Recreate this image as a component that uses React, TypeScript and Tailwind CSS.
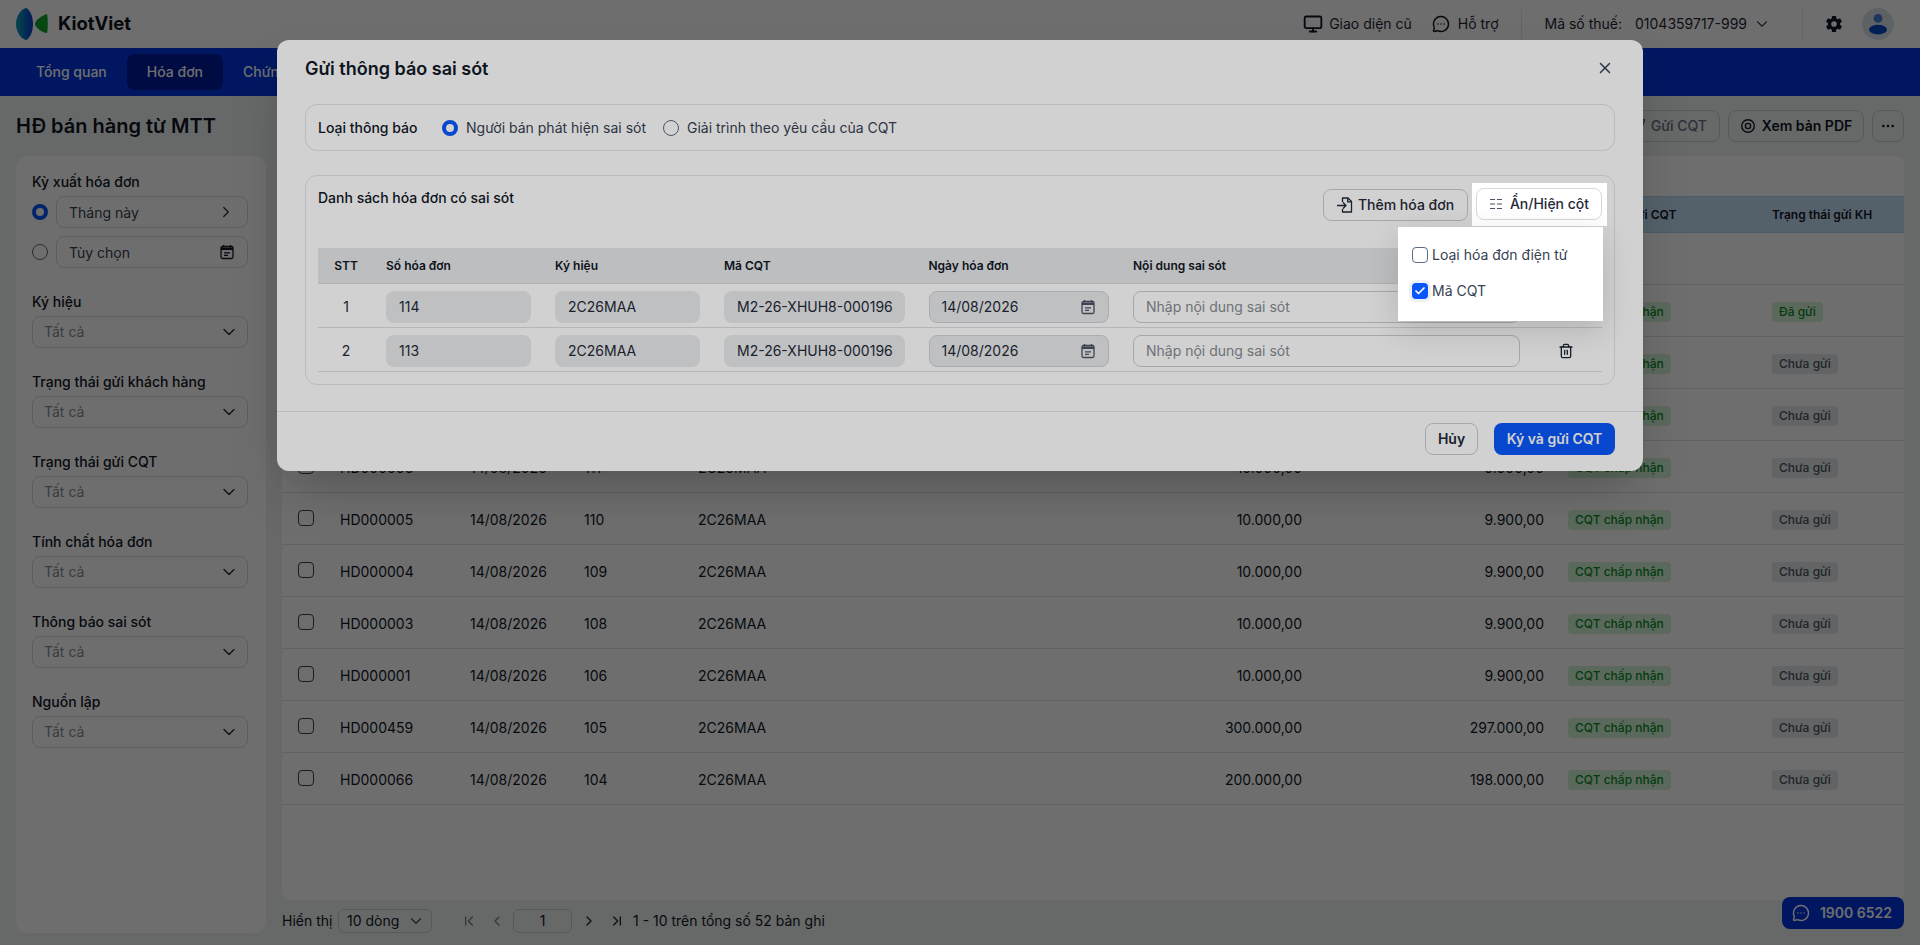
import {
  Check,
  ChevronDown,
  ChevronFirst,
  ChevronLast,
  ChevronLeft,
  ChevronRight,
  MessageCircleMore,
  Monitor,
  MoreHorizontal,
  Send,
  Trash2,
  X,
} from 'lucide-react';
import { IoSettingsSharp } from 'react-icons/io5';

const navItems = ['Tổng quan', 'Hóa đơn', 'Chứng từ', 'Báo cáo'];

const filters = ['Ký hiệu', 'Trạng thái gửi khách hàng', 'Trạng thái gửi CQT', 'Tính chất hóa đơn', 'Thông báo sai sót', 'Nguồn lập'];

const rows = [
  { code: 'HD000009', no: '114', total: '10.000,00', pay: '9.900,00', sent: true },
  { code: 'HD000008', no: '113', total: '10.000,00', pay: '9.900,00', sent: false },
  { code: 'HD000007', no: '112', total: '10.000,00', pay: '9.900,00', sent: false },
  { code: 'HD000006', no: '111', total: '10.000,00', pay: '9.900,00', sent: false },
  { code: 'HD000005', no: '110', total: '10.000,00', pay: '9.900,00', sent: false },
  { code: 'HD000004', no: '109', total: '10.000,00', pay: '9.900,00', sent: false },
  { code: 'HD000003', no: '108', total: '10.000,00', pay: '9.900,00', sent: false },
  { code: 'HD000001', no: '106', total: '10.000,00', pay: '9.900,00', sent: false },
  { code: 'HD000459', no: '105', total: '300.000,00', pay: '297.000,00', sent: false },
  { code: 'HD000066', no: '104', total: '200.000,00', pay: '198.000,00', sent: false },
];

const errorRows = [
  { stt: 1, no: '114' },
  { stt: 2, no: '113' },
];

function Logo() {
  return (
    <svg width="34" height="32" viewBox="0 0 34 32" fill="none">
      <defs>
        <linearGradient id="kv-blue" x1="0" y1="0" x2="1" y2="0">
          <stop offset="0" stopColor="#0f9fb0" />
          <stop offset="1" stopColor="#0a3fd0" />
        </linearGradient>
      </defs>
      <path d="M10 0C5 1 0 8 0 16c0 8 5 15 10 16 3-1 7-7 7-16S13 1 10 0Z" fill="url(#kv-blue)" />
      <path d="M31 6c-4 1-12 6-12 10 0 4 8 9 12 9 1-2 1-16 0-19Z" fill="#12a52a" />
    </svg>
  );
}

function CalendarIcon({ className }: { className?: string }) {
  return (
    <svg className={className} viewBox="0 0 16 16" fill="none">
      <path d="M4.5 1v2.5M11.5 1v2.5" stroke="currentColor" strokeWidth="1.4" />
      <rect x="2" y="2.5" width="12" height="12" rx="1.5" stroke="currentColor" strokeWidth="1.3" />
      <path d="M2 3.5h12v2.5H2z" fill="currentColor" />
      <path d="M5 8.8h6M5 11.4h4" stroke="currentColor" strokeWidth="1.2" />
    </svg>
  );
}

function ColumnsIcon() {
  return (
    <svg width="14" height="14" viewBox="0 0 14 14" fill="none" stroke="#4b5563" strokeWidth="1">
      <path d="M1 2.5h5M8 2.5h5M1 7h5M8 7h5M1 11.5h5M8 11.5h5" />
    </svg>
  );
}

function AddFileIcon() {
  return (
    <svg width="16" height="16" viewBox="0 0 16 16" fill="none" stroke="currentColor" strokeWidth="1.3">
      <path d="M5.5 5V1h5.5l3.5 3.5V15H5.5v-3" strokeLinejoin="round" />
      <path d="M10.7 1v3.8h3.8" />
      <path d="M0.5 8.5h8.5M6.3 5.8 9 8.5l-2.7 2.7" strokeLinecap="round" strokeLinejoin="round" />
    </svg>
  );
}

function EyeRing() {
  return (
    <svg width="16" height="16" viewBox="0 0 16 16" fill="none" stroke="currentColor" strokeWidth="1.4">
      <circle cx="8" cy="8" r="6.3" />
      <circle cx="8" cy="8" r="2.6" />
    </svg>
  );
}

function Avatar() {
  return (
    <div className="flex h-8 w-8 items-center justify-center rounded-full bg-[#dbe3ea]">
      <svg width="18" height="22" viewBox="0 0 18 22">
        <circle cx="9" cy="5.4" r="4.4" fill="#4a7bd0" />
        <ellipse cx="9" cy="16.6" rx="9" ry="4.9" fill="#0048c8" />
      </svg>
    </div>
  );
}

function Radio({ on }: { on?: boolean }) {
  return on ? (
    <span className="h-4 w-4 shrink-0 rounded-full border-[4px] border-[#0957fa] bg-white" />
  ) : (
    <span className="h-4 w-4 shrink-0 rounded-full border border-[#5d6b7e] bg-white" />
  );
}

function Box({ on }: { on?: boolean }) {
  return on ? (
    <span className="flex h-4 w-4 shrink-0 items-center justify-center rounded-[4px] bg-[#0957fa] ring-[3px] ring-[#eceff3]">
      <Check className="h-3 w-3 text-white" strokeWidth={3.5} />
    </span>
  ) : (
    <span className="h-4 w-4 shrink-0 rounded-[4px] border border-[#5d6b7e] bg-white" />
  );
}

function Sidebar() {
  return (
    <aside className="flex w-[250px] shrink-0 flex-col rounded-xl bg-white pl-4 pr-[18px] pt-4">
      <div className="mb-[4px] flex h-[20px] items-center text-sm font-medium text-[#111827]">Kỳ xuất hóa đơn</div>
      <div className="flex flex-col gap-2">
        <div className="flex items-center gap-2">
          <Radio on />
          <div className="flex h-8 flex-1 items-center justify-between rounded-lg border border-[#d3d8de] pl-3 pr-[12px] pt-px text-sm text-[#374151]">
            Tháng này
            <ChevronRight className="-mt-px h-[18px] w-[18px] text-[#1f2937]" strokeWidth={1.6} />
          </div>
        </div>
        <div className="flex items-center gap-2">
          <Radio />
          <div className="flex h-8 flex-1 items-center justify-between rounded-lg border border-[#d3d8de] pl-3 pr-[12px] pt-px text-sm text-[#374151]">
            Tùy chọn
            <CalendarIcon className="-mt-px h-4 w-4 text-[#111827]" />
          </div>
        </div>
      </div>
      <div className="mt-[24px] flex flex-col gap-[24px]">
        {filters.map((f) => (
          <div key={f} className="flex flex-col gap-[4px]">
            <div className="flex h-[20px] items-center text-sm font-medium text-[#111827]">{f}</div>
            <div className="flex h-8 items-center justify-between rounded-lg border border-[#d3d8de] pl-[11px] pr-[8px] text-sm text-[#868c93]">
              Tất cả
              <ChevronDown className="h-5 w-5 text-[#1f2937]" strokeWidth={1.5} />
            </div>
          </div>
        ))}
      </div>
    </aside>
  );
}

const tableCols = 'grid grid-cols-[58px_130px_114px_114px_302px_302px_242px_24px_204px_132px] items-center';

function InvoiceTable() {
  return (
    <div className="flex-1 overflow-hidden rounded-lg bg-white pt-[40px]">
      <div className={`${tableCols} h-[37px] border-y border-[#b4d4ee] bg-[#c4e0f6] text-xs font-semibold text-[#111827]`}>
        <span />
        <span>Số hóa đơn</span>
        <span>Ngày hóa đơn</span>
        <span>Số HĐ</span>
        <span>Ký hiệu</span>
        <span className="text-right">Tổng tiền</span>
        <span className="text-right">Thanh toán</span>
        <span />
        <span>Trạng thái gửi CQT</span>
        <span>Trạng thái gửi KH</span>
      </div>
      <div className="h-[52px] border-b border-[#dde1e5]" />
      {rows.map((r) => (
        <div key={r.code} className={`${tableCols} h-[52px] border-b border-[#dde1e5] pt-[2px] text-sm text-[#111827]`}>
          <span className="-mt-[4px] pl-4">
            <span className="block h-4 w-4 rounded-[4px] border border-[#374151]" />
          </span>
          <span>{r.code}</span>
          <span>14/08/2026</span>
          <span>{r.no}</span>
          <span>2C26MAA</span>
          <span className="text-right">{r.total}</span>
          <span className="text-right">{r.pay}</span>
          <span />
          <span>
            <span className="inline-flex h-5 items-center rounded bg-[#d3f3d8] px-[7px] text-xs font-medium text-[#0a8a1f]">
              CQT chấp nhận
            </span>
          </span>
          <span>
            {r.sent ? (
              <span className="inline-flex h-5 items-center rounded bg-[#d3f3d8] px-[7px] text-xs font-medium text-[#0a8a1f]">
                Đã gửi
              </span>
            ) : (
              <span className="inline-flex h-5 items-center rounded bg-[#e3e6ea] px-[7px] text-xs font-medium text-[#4b5563]">
                Chưa gửi
              </span>
            )}
          </span>
        </div>
      ))}
    </div>
  );
}

function Pager() {
  return (
    <div className="flex h-[24px] items-center text-sm text-[#111827]">
      <span className="w-[56px]">Hiển thị</span>
      <div className="flex h-6 w-[94px] items-center justify-between rounded-md border border-[#c9ced4] pl-2 pr-[6px]">
        10 dòng
        <ChevronDown className="h-[18px] w-[18px] text-[#374151]" strokeWidth={1.5} />
      </div>
      <ChevronFirst className="ml-[29px] h-4 w-4 text-[#7b8087]" />
      <ChevronLeft className="ml-3 h-4 w-4 text-[#7b8087]" />
      <div className="ml-2 flex h-6 w-[59px] items-center justify-center rounded-md border border-[#c9ced4]">1</div>
      <ChevronRight className="ml-[9px] h-4 w-4 text-[#1f2937]" />
      <ChevronLast className="ml-3 h-4 w-4 text-[#1f2937]" />
      <span className="ml-2">1 - 10 trên tổng số 52 bản ghi</span>
    </div>
  );
}

function NoticeModal() {
  return (
    <div className="absolute left-[277px] top-[40px] flex h-[431px] w-[1366px] flex-col rounded-xl bg-white shadow-2xl">
      <div className="flex h-[64px] items-start justify-between px-7 pt-[15px]">
        <h2 className="text-lg font-semibold text-[#111827]">Gửi thông báo sai sót</h2>
        <X className="mr-px mt-1 h-[18px] w-[18px] text-[#374151]" />
      </div>
      <div className="flex flex-1 flex-col gap-6 px-7">
        <div className="flex h-[47px] items-center rounded-xl border border-[#e0e4ea] px-3 text-sm">
          <span className="w-[124px] font-medium text-[#111827]">Loại thông báo</span>
          <div className="flex items-center gap-2 text-[#374151]">
            <Radio on />
            Người bán phát hiện sai sót
          </div>
          <div className="ml-[17px] flex items-center gap-2 text-[#374151]">
            <Radio />
            Giải trình theo yêu cầu của CQT
          </div>
        </div>
        <div className="flex h-[210px] flex-col rounded-xl border border-[#e0e4ea] px-3 pt-3">
          <div className="flex h-8 items-start justify-between">
            <span className="flex h-5 items-center text-sm font-medium text-[#111827]">Danh sách hóa đơn có sai sót</span>
            <div className="flex items-center gap-1">
              <button className="flex h-8 w-[145px] items-center justify-center gap-[5px] rounded-lg border border-[#c9ced4] text-sm font-medium text-[#1f2937]">
                <AddFileIcon />
                Thêm hóa đơn
              </button>
              {/* highlighted by the tour, sits above the tour mask */}
              <div className="relative z-30 -my-[5px] -mr-[5px] bg-white pb-[6px] pl-1 pr-[5px] pt-[5px]">
                <button className="flex h-8 w-[126px] items-center justify-center gap-[7px] rounded-lg border border-[#d3d8de] bg-white text-sm font-medium text-[#1f2937]">
                  <ColumnsIcon />
                  Ẩn/Hiện cột
                </button>
                <div className="absolute right-[4px] top-[44px] h-[94px] w-[205px] bg-white pl-[14px] pt-[20px] shadow-[0_10px_30px_rgba(0,0,0,0.14)]">
                  <label className="flex h-4 items-center gap-1 text-sm text-[#374151]">
                    <Box />
                    Loại hóa đơn điện tử
                  </label>
                  <label className="mt-5 flex h-4 items-center gap-1 text-sm text-[#374151]">
                    <Box on />
                    Mã CQT
                  </label>
                </div>
              </div>
            </div>
          </div>
          <div className="mt-[28px] grid h-9 grid-cols-[56px_169px_169px_204.5px_204.5px_411px_70px] items-center border-b border-[#d8dadd] bg-[#e7e8ea] text-xs font-semibold text-[#111827]">
            <span className="text-center">STT</span>
            <span className="pl-3">Số hóa đơn</span>
            <span className="pl-3">Ký hiệu</span>
            <span className="pl-3">Mã CQT</span>
            <span className="pl-3">Ngày hóa đơn</span>
            <span className="pl-3">Nội dung sai sót</span>
            <span />
          </div>
          {errorRows.map((r) => (
            <div
              key={r.stt}
              className="grid h-11 grid-cols-[56px_169px_169px_204.5px_204.5px_411px_70px] items-start border-b border-[#dcdee1] pt-[7px] text-sm text-[#1f2937]"
            >
              <span className="flex h-8 items-center justify-center">{r.stt}</span>
              <div className="px-3">
                <div className="flex h-8 items-center rounded-lg bg-[#eaebed] px-[13px]">{r.no}</div>
              </div>
              <div className="px-3">
                <div className="flex h-8 items-center rounded-lg bg-[#eaebed] px-[13px]">2C26MAA</div>
              </div>
              <div className="px-3">
                <div className="flex h-8 items-center whitespace-nowrap rounded-lg bg-[#eaebed] px-[13px]">M2-26-XHUH8-000196</div>
              </div>
              <div className="px-3">
                <div className="flex h-8 items-center justify-between rounded-lg border border-[#cfd3d8] bg-[#eaebed] px-3">
                  14/08/2026
                  <CalendarIcon className="h-4 w-4 text-[#4b5563]" />
                </div>
              </div>
              <div className="px-3">
                <div className="flex h-8 items-center rounded-lg border border-[#c9ced4] px-3 text-[#868c93]">Nhập nội dung sai sót</div>
              </div>
              <div className="flex h-8 items-center justify-center pr-[2px]">
                <Trash2 className="h-4 w-4 text-[#1f2937]" />
              </div>
            </div>
          ))}
        </div>
      </div>
      <div className="flex h-[60px] items-start justify-end gap-4 border-t border-[#e0e4ea] px-7 pt-[11px]">
        <button className="h-8 w-[53px] rounded-lg border border-[#c9ced4] text-sm font-semibold text-[#1f2937]">Hủy</button>
        <button className="h-8 w-[121px] rounded-lg bg-[#0957fa] text-sm font-semibold text-white">Ký và gửi CQT</button>
      </div>
    </div>
  );
}

export default function App() {
  return (
    <div className="relative h-[945px] overflow-hidden bg-[#eef2f2] font-['Inter',sans-serif]">
      <header className="flex h-12 items-center bg-white pl-4 pr-[26px]">
        <Logo />
        <span className="ml-2 text-[18.5px] font-bold text-[#0f1722]">KiotViet</span>
        <div className="ml-auto flex h-[30px] items-center text-sm text-[#1f2937]">
          <Monitor className="h-5 w-5 text-[#111827]" strokeWidth={2.2} />
          <span className="ml-[6px]">Giao diện cũ</span>
          <MessageCircleMore className="ml-5 h-[18px] w-[18px] text-[#111827]" />
          <span className="ml-[8px]">Hỗ trợ</span>
          <div className="ml-[22px] h-[30px] w-px bg-[#e5e7eb]" />
          <span className="ml-[23px]">Mã số thuế:</span>
          <span className="ml-[13px]">0104359717-999</span>
          <ChevronDown className="ml-[6px] h-[18px] w-[18px] text-[#374151]" strokeWidth={1.5} />
          <div className="ml-[31px] h-[30px] w-px bg-[#e5e7eb]" />
          <IoSettingsSharp className="ml-[22px] h-[18px] w-[18px] text-[#111827]" />
          <div className="ml-[19px]">
            <Avatar />
          </div>
        </div>
      </header>
      <nav className="flex h-12 items-center bg-[#0035e0] pl-4">
        {navItems.map((n, i) => (
          <div
            key={n}
            className={
              i === 1
                ? 'flex h-9 items-center rounded-lg bg-[#001a9c] px-5 text-sm font-medium text-white'
                : 'flex h-9 items-center rounded-lg px-5 text-sm font-medium text-white'
            }
          >
            {n}
          </div>
        ))}
      </nav>
      <div className="flex h-[60px] items-center justify-between px-4">
        <h1 className="text-xl font-semibold text-[#111827]">HĐ bán hàng từ MTT</h1>
        <div className="flex items-center gap-2">
          <button className="flex h-8 w-[110px] items-center justify-end gap-[5px] rounded-lg border border-[#c9ced4] pr-3 text-sm font-medium text-[#6b7280]">
            <Send className="h-4 w-4" />
            Gửi CQT
          </button>
          <button className="flex h-8 w-[136px] items-center justify-center gap-[6px] rounded-lg border border-[#c9ced4] text-sm font-semibold text-[#111827]">
            <EyeRing />
            Xem bản PDF
          </button>
          <button className="flex h-8 w-8 items-center justify-center rounded-lg border border-[#c9ced4] text-[#111827]">
            <MoreHorizontal className="h-4 w-4" />
          </button>
        </div>
      </div>
      <div className="flex h-[789px] gap-4 px-4 pb-3">
        <Sidebar />
        <main className="flex flex-1 flex-col">
          <InvoiceTable />
          <div className="mt-[9px]">
            <Pager />
          </div>
        </main>
      </div>
      <button className="absolute left-[1782px] top-[897px] flex h-8 w-[122px] items-center justify-center gap-[10px] rounded-lg bg-[#0035e0] pr-[2px] text-sm font-semibold text-white">
        <MessageCircleMore className="h-[18px] w-[18px]" />
        1900 6522
      </button>
      <div className="absolute inset-0 bg-black/[.47]" />
      <NoticeModal />
      <div className="absolute inset-0 z-20 bg-black/[.18]" />
    </div>
  );
}
